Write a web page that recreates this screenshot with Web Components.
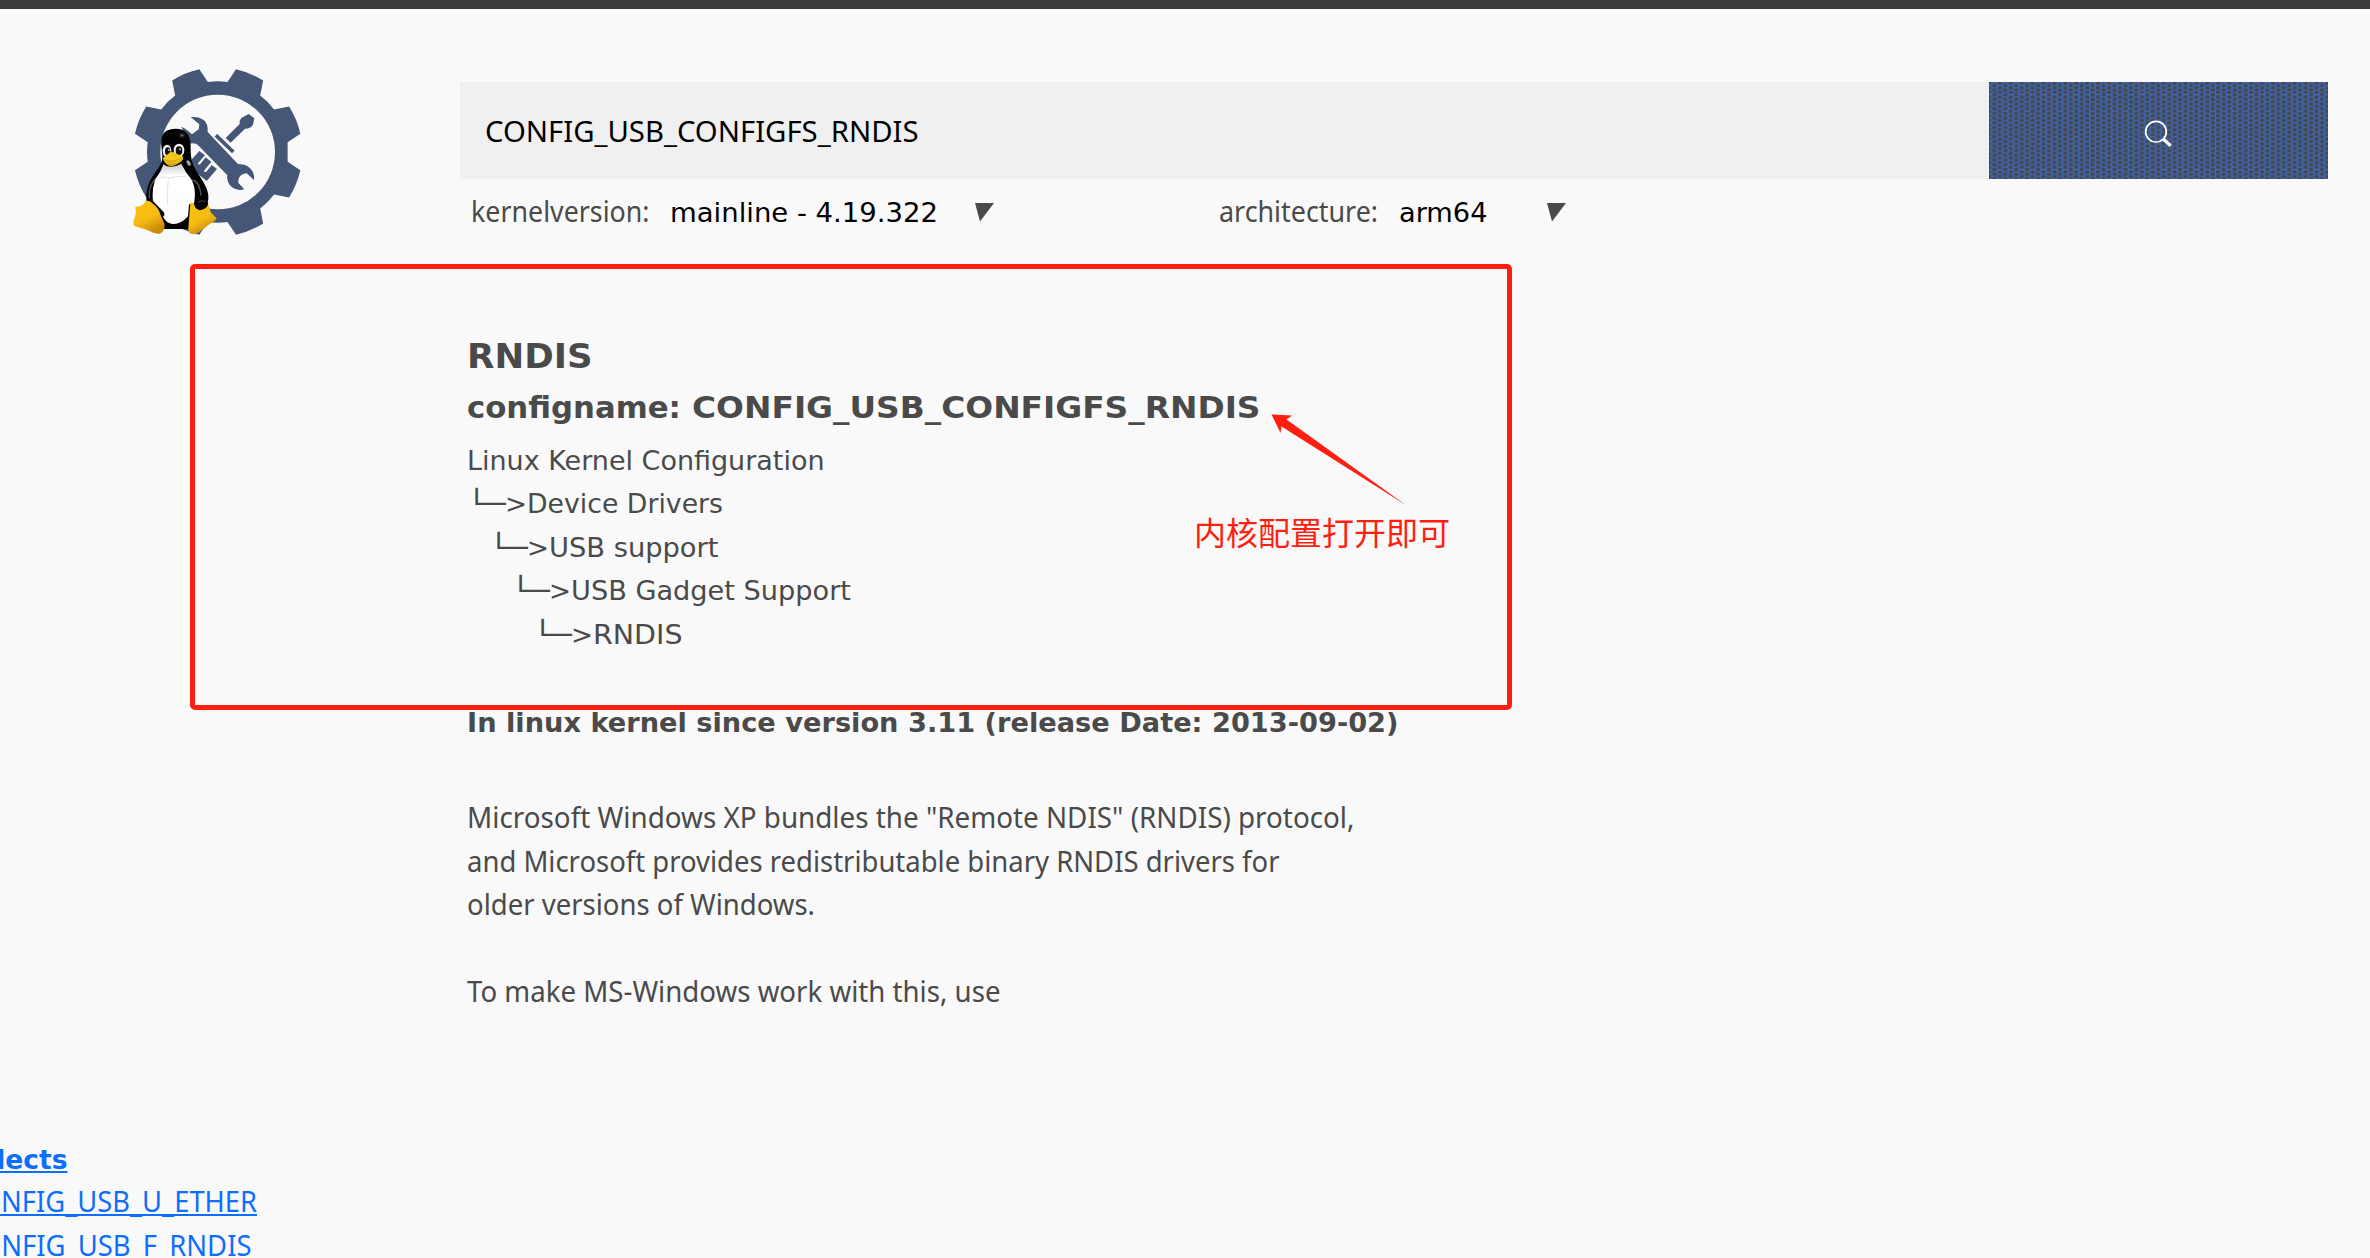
<!DOCTYPE html>
<html lang="en">
<head>
<meta charset="utf-8">
<title>CONFIG_USB_CONFIGFS_RNDIS</title>
<style>
html,body{margin:0;height:100%;overflow:hidden;background:#f9f9f9;font-variant-ligatures:none}
</style>
</head>
<body>
<kernel-page></kernel-page>
<script>
const define=(name,html,setup)=>customElements.define(name,class extends HTMLElement{
  connectedCallback(){
    if(this.shadowRoot)return;
    const t=document.createElement('template');
    t.innerHTML=html;
    this.attachShadow({mode:'open'}).append(t.content.cloneNode(true));
    if(setup)setup(this,this.shadowRoot);
  }
});

/* Scales a fit-text element horizontally to the advance w. */
const fit=(el,w)=>{
  const s=el.shadowRoot.querySelector('span');
  el.style.width=w+'px';
  s.style.transform='none';
  s.style.transform='scaleX('+w/s.getBoundingClientRect().width+')';
};

define('fit-text',`<style>
:host{display:block;flex:none;white-space:pre}
span{display:inline-block;transform-origin:0 50%;text-decoration:inherit}
</style><span><slot></slot></span>`,el=>{
  if(el.hasAttribute('w'))fit(el,+el.getAttribute('w'));
});

const weave=id=>`<pattern id="${id}" width="10.92" height="4.67" patternUnits="userSpaceOnUse" x="2.7" y="1">
<rect width="10.92" height="4.67" fill="#3d67b4"/>
<rect x=".6" y=".6" width="4.2" height="3.5" rx=".8" fill="#454850"/>
<rect x="6.06" y="-1.73" width="4.2" height="3.5" rx=".8" fill="#454850"/>
<rect x="6.06" y="2.94" width="4.2" height="3.5" rx=".8" fill="#454850"/></pattern>`;

define('site-logo',`<style>:host{display:block;width:200px;height:190px;flex:none}svg{display:block}</style>
<svg width="200" height="190" viewBox="0 0 600 570">
<defs>
<pattern id="p" width="16" height="12" patternUnits="userSpaceOnUse"><rect width="16" height="12" fill="#3f5c8d"/>
<rect x="1" y="1" width="6" height="8" fill="#4a5160"/><rect x="9" y="-5" width="6" height="8" fill="#4a5160"/><rect x="9" y="7" width="6" height="8" fill="#4a5160"/></pattern>
<linearGradient id="foot" x1="0" y1="0" x2=".5" y2="1"><stop offset=".6" stop-color="#f7bd11"/><stop offset="1" stop-color="#c9890c"/></linearGradient>
<linearGradient id="beak" x1="0" y1="0" x2="0" y2="1"><stop offset="0" stop-color="#f3c410"/><stop offset=".6" stop-color="#f5c81c"/><stop offset="1" stop-color="#c99207"/></linearGradient>
<linearGradient id="belly" x1="0" y1="0" x2="0" y2="1"><stop offset="0" stop-color="#c9c9c9"/><stop offset=".2" stop-color="#fff"/><stop offset="1" stop-color="#fdfdfd"/></linearGradient>
<radialGradient id="shine"><stop offset="0" stop-color="#777"/><stop offset="1" stop-color="#000" stop-opacity="0"/></radialGradient>
</defs>
<path id="gear" fill="url(#p)" fill-rule="evenodd"/>
<g fill="url(#p)">
<path d="M212 186Q238 184 252 196Q265 207 263 231L348 321Q352 328 364 328Q382 329 393 343Q404 356 402 375L380 355Q369 356 363 361Q354 369 355 383L372 402Q365 408 346 402Q329 394 324 380Q319 370 322 361L236 272Q226 262 208 266L184 216Q195 218 216 238L236 223L238 208Z"/>
<path d="M386 177L403 190L399 209Q390 222 375 221L332 263L317 249L359 207Q357 197 364 189Z"/>
<path d="M291 236L344 287L336 295L284 245Z"/>
<path d="M238 288L255 301L234 325Q235 331 241 327L257 307L274 320L252 347Q253 353 259 350L275 330L291 342L260 378L200 330Z"/>
</g>
<path d="M124 270C120 235 139 221 167 221C199 221 213 242 212 276C211 315 219 333 237 360C254 385 268 411 265 433Q262 463 230 466L208 522H125L80 441C76 412 83 385 99 362C116 337 128 325 127 303Z" fill="#030303"/>
<path d="M130 328Q151 344 184 326Q195 350 213 371C229 399 225 427 222 446L207 448L204 484Q182 509 157 507Q140 505 132 490L96 440C98 410 98 390 106 371Q122 354 130 328Z" fill="url(#belly)"/>
<path d="M92 435Q86 405 107 376Q93 402 99 438L131 471Q137 480 128 487L112 482Z" fill="#080808"/>
<path d="M88 430Q84 399 104 373M217 375Q239 379 243 422" fill="none" stroke="#555" stroke-width="4"/>
<path d="M110 370Q130 361 150 370Q172 360 200 366M145 377Q139 410 143 451" fill="none" stroke="#e2e2e2" stroke-width="3"/>
<ellipse cx="186" cy="241" rx="14" ry="11" fill="url(#shine)"/>
<ellipse cx="206" cy="324" rx="5" ry="9" fill="#aaa" transform="rotate(-30 206 324)"/>
<ellipse cx="141" cy="288" rx="13" ry="19" fill="#f1f1f1"/><ellipse cx="177" cy="286" rx="16" ry="20" fill="#f1f1f1"/>
<ellipse cx="143" cy="289" rx="8" ry="12" fill="#111"/><ellipse cx="177" cy="287" rx="10" ry="13" fill="#111"/>
<circle cx="146" cy="285" r="3" fill="#bbb"/><circle cx="180" cy="283" r="3" fill="#bbb"/>
<path d="M128 311Q135 303 143 298Q153 287 165 294Q178 301 188 304Q193 314 180 322Q165 334 151 334Q138 331 128 311Z" fill="url(#beak)"/>
<path d="M131 313Q150 327 188 308" fill="none" stroke="#b8860b" stroke-width="2"/>
<path d="M46 455Q67 455 76 440Q86 433 99 446Q116 458 122 481L134 508Q134 532 117 537Q99 534 80 524L43 513Q36 504 45 486Q50 472 46 455Z" fill="url(#foot)"/>
<path d="M211 444Q221 440 227 458Q243 469 263 447Q269 455 272 472L290 490Q286 500 270 506L237 532Q222 541 209 535Q203 525 206 507Z" fill="url(#foot)"/>
<path d="M224 450Q224 437 238 434Q257 433 265 444Q262 462 240 466Q226 463 224 450Z" fill="#050505"/>
<path d="M235 441Q246 435 257 439" fill="none" stroke="#444" stroke-width="3"/>
</svg>`,(el,root)=>{
  const pt=(r,a)=>{a*=Math.PI/180;return (293+r*Math.cos(a)).toFixed(1)+' '+(291-r*Math.sin(a)).toFixed(1)};
  let d='M'+pt(212,8);
  for(let k=0;k<8;k++){
    const c=22.5+45*k;
    d+=`A212 212 0 0 0 ${pt(212,c-14.5)}L${pt(254,c-10)}A254 254 0 0 0 ${pt(254,c+10)}L${pt(212,c+14.5)}`;
  }
  d+='ZM465 291A172 172 0 1 0 121 291A172 172 0 1 0 465 291Z';
  root.querySelector('#gear').setAttribute('d',d);
});

define('search-button',`<style>:host{display:block;width:339px;height:97px;flex:none}svg{display:block}</style>
<svg width="339" height="97"><defs>${weave('w')}</defs><rect width="339" height="97" fill="url(#w)"/>
<g stroke="#3d70cf" stroke-width="1" stroke-dasharray="5 5.92"><path d="M-2.5 12.5H339M-2.5 87.5H339"/></g>
<circle cx="167" cy="49.7" r="10.3" fill="none" stroke="#fff" stroke-width="1.7"/>
<path d="M174.5 57.2L181.7 63.8" stroke="#fff" stroke-width="3.2"/></svg>`);

define('search-bar',`<style>
:host{display:flex;height:97px}
.field{width:1504px;padding-left:25px;background:#f0f0f0;color:#000;font:29px/97px "Noto Sans",sans-serif}
</style><div class="field"><fit-text w="433.5"><slot></slot></fit-text></div><search-button></search-button>`);

define('filter-select',`<style>
:host{display:flex;align-items:flex-start;height:44px;color:#4a4a4a}
.label{font:28.5px/44px "Noto Sans",sans-serif}
.value{font:27px/47px "DejaVu Sans",sans-serif;color:#000}
svg{display:block;margin-top:14px}
</style><fit-text class="label"></fit-text><fit-text class="value"></fit-text><svg width="20" height="19"><path d="M0 0H19L5 18.5Z" fill="#4a4a4a"/></svg>`,(el,root)=>{
  const a=n=>el.getAttribute(n);
  const l=root.querySelector('.label'),v=root.querySelector('.value');
  l.textContent=a('label');v.textContent=a('value');
  fit(l,+a('lw'));fit(v,+a('vw'));
  v.style.marginLeft=a('gap')+'px';
  root.querySelector('svg').style.marginLeft=a('arrow')+'px';
});

define('page-header',`<style>
:host{display:flex;height:321px;align-items:flex-start}
site-logo{margin:46px 140px 0 120px}
.col{padding-top:73px}
.filters{display:flex;padding:10px 0 0 11px}
.arch{margin-left:224px}
</style><site-logo></site-logo><div class="col"><search-bar>CONFIG_USB_CONFIGFS_RNDIS</search-bar>
<div class="filters"><filter-select label="kernelversion:" lw="178.5" gap="20.5" value="mainline - 4.19.322" vw="268" arrow="37"></filter-select>
<filter-select class="arch" label="architecture:" lw="159" gap="21" value="arm64" vw="88.5" arrow="59"></filter-select></div></div>`);

/* A step in the menu path, indented by its depth. */
define('tree-step',`<style>:host{display:flex;height:43.4px}</style>
<fit-text w="38.5">└─</fit-text><fit-text w="22">&gt;</fit-text><fit-text class="t"></fit-text>`,(el,root)=>{
  el.style.marginLeft=(el.getAttribute('depth')-1)*22-.5+'px';
  const t=root.querySelector('.t');
  t.textContent=el.getAttribute('label');
  fit(t,+el.getAttribute('w'));
});

define('config-article',`<style>
:host{display:block;padding-left:467px;color:#4a4a4a;font:27px/43.4px "DejaVu Sans",sans-serif}
h1,h2,p{margin:0}
h1{font-size:34px;line-height:52px}
h2{display:flex;font-size:30.3px;line-height:51px}
.path{margin-top:6px}
.since{font-weight:700;margin-top:45.4px}
.help{margin-top:51.4px;font-family:"Noto Sans",sans-serif;font-size:28.5px}
.help fit-text:nth-child(4){margin-top:43.4px}
</style>
<h1><fit-text w="125.5">RNDIS</fit-text></h1>
<h2><fit-text w="224.5">configname: </fit-text><fit-text w="568.5">CONFIG_USB_CONFIGFS_RNDIS</fit-text></h2>
<div class="path"><fit-text w="357.5">Linux Kernel Configuration</fit-text>
<tree-step depth="1" label="Device Drivers" w="196"></tree-step>
<tree-step depth="2" label="USB support" w="169.5"></tree-step>
<tree-step depth="3" label="USB Gadget Support" w="280"></tree-step>
<tree-step depth="4" label="RNDIS" w="89.5"></tree-step></div>
<p class="since"><fit-text w="931.5">In linux kernel since version 3.11 (release Date: 2013-09-02)</fit-text></p>
<div class="help"><fit-text w="887.5">Microsoft Windows XP bundles the "Remote NDIS" (RNDIS) protocol,</fit-text>
<fit-text w="812.5">and Microsoft provides redistributable binary RNDIS drivers for</fit-text>
<fit-text w="348">older versions of Windows.</fit-text>
<fit-text w="533.5">To make MS-Windows work with this, use</fit-text></div>`);

define('select-links',`<style>
:host{display:block;margin-top:127px;color:#0d6efd;font:28.5px/43.4px "Noto Sans",sans-serif;text-decoration:underline;text-decoration-thickness:2px;text-underline-offset:2px;text-decoration-skip-ink:none}
fit-text{margin-left:-37px;text-decoration:inherit}
.h{font:700 27px/40px "DejaVu Sans",sans-serif;margin-left:-41.5px}
</style><fit-text class="h" w="108.5">Selects</fit-text><fit-text w="294">CONFIG_USB_U_ETHER</fit-text><fit-text w="288.5" style="text-decoration:none">CONFIG_USB_F_RNDIS</fit-text>`);

/* Red mark-up lying over the page: frame, arrow and note. */
define('red-note',`<style>
:host{position:absolute;left:189.5px;top:263.5px;width:1312px;height:436px;border:5px solid #ff1e10;border-radius:5px;color:#ff1e10}
svg{position:absolute;left:1070px;top:140px;overflow:visible}
.n{position:absolute;left:999.5px;top:238px;font:32px/48px "Noto Sans CJK SC",sans-serif}
</style><svg width="150" height="100"><path d="M6.5 5.5L27 6.5L21.5 10.5L141.5 96.5L16.5 17.5L15.5 24Z" fill="#ff1e10"/></svg><fit-text class="n" w="256"><slot></slot></fit-text>`);

define('kernel-page',`<style>
:host{display:block;position:relative;height:1258px;overflow:hidden;background:#f9f9f9}
.bar{height:9px;background:#3b3b3b}
</style><div class="bar"></div><page-header></page-header><config-article></config-article><select-links></select-links><red-note>内核配置打开即可</red-note>`);
</script>
</body>
</html>
